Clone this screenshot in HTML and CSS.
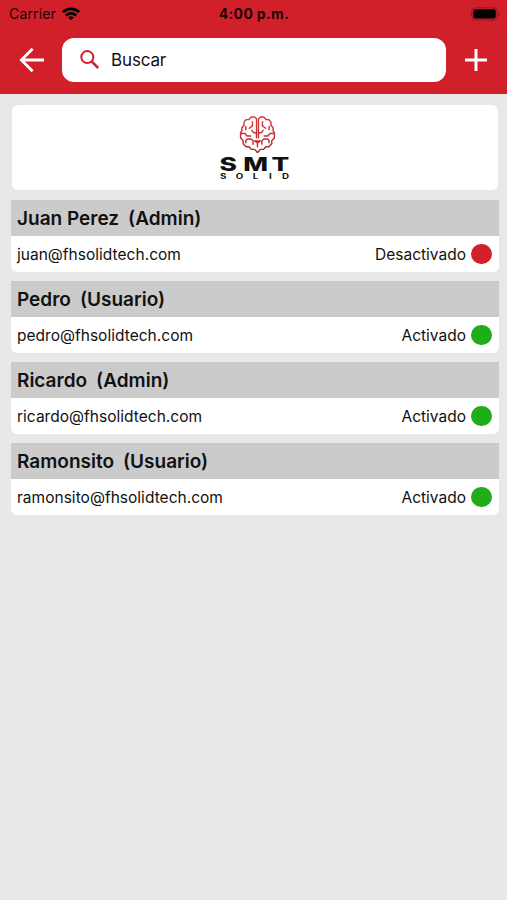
FILE: index.html
```html
<!DOCTYPE html>
<html lang="es">
<head>
<meta charset="utf-8">
<meta name="viewport" content="width=device-width, initial-scale=1">
<title>Usuarios</title>
<link rel="stylesheet" href="styles.css">
</head>
<body>
<header class="top">
  <div class="status">
    <div class="carrier"><span>Carrier</span>
      <svg class="wifi" viewBox="0 0 18 14" width="18" height="14"><g fill="none" stroke="currentColor" stroke-width="2.8"><path d="M.9 5.1a11.7 11.7 0 0 1 16.2 0"/><path d="M3.9 8.4a7.3 7.3 0 0 1 10.2 0"/></g><path d="M9 13.3 6.2 10.5a4 4 0 0 1 5.6 0z" fill="currentColor"/></svg>
    </div>
    <div class="time">4:00 p.m.</div>
    <svg class="battery" viewBox="0 0 30 14" width="30" height="14"><rect x=".8" y=".8" width="25.4" height="12.2" rx="3.6" fill="none" stroke="#8d171e"/><rect x="2.3" y="2.3" width="22.4" height="9.2" rx="2.2"/><path d="M27.3 4.8q3 2 0 4.2z" fill="#8d171e"/></svg>
  </div>
  <div class="bar">
    <svg class="back" viewBox="0 0 26 26" width="26" height="26" fill="none" stroke="#fff" stroke-width="2.8"><path d="M25 13H3M13.6 1.8 2.4 13l11.2 11.2"/></svg>
    <label class="search">
      <svg viewBox="0 0 20 20" width="20" height="20" fill="none" stroke="#d2202a"><circle cx="7.3" cy="7.1" r="6" stroke-width="2"/><path d="m11.6 11.4 6.6 6.6" stroke-width="2.5"/></svg>
      <span>Buscar</span>
    </label>
    <svg class="add" viewBox="0 0 22 22" width="22" height="22" fill="none" stroke="#fff" stroke-width="3"><path d="M11 0v22M0 11h22"/></svg>
  </div>
</header>
<main class="content">
  <section class="logo">
    <svg viewBox="0 0 90 85" width="90" height="85">
      <defs><linearGradient id="red" x1="0" y1="11" x2="0" y2="48" gradientUnits="userSpaceOnUse"><stop offset="0" stop-color="#e5343c"/><stop offset="1" stop-color="#a92a31"/></linearGradient>
      <g id="half">
        <path d="M48.7 34V14l2.2-1.9h3.4l2.6 2.7h2.7l2.4 2.7v3.3l2.2 2.6v3.4l1.4 2.2v5.3l-2.8 3v3.2l-3 3h-3.2l-2.4 2.8h-3.4l-2.6 2.9h-1"/>
        <path d="M53 17v4.5l3.3 2.5M48.7 28.8h3l2-2.6M65 29.6h-4l-2.4 2.6h-3.8M52.4 41v-4l2-1.6h4l1.6 1.6v2.4M60 22v3.6"/>
      </g></defs>
      <g transform="translate(2.4 .6) scale(.945)" fill="none" stroke="url(#red)" stroke-width="1.5" stroke-linejoin="round" stroke-linecap="round"><use href="#half"/><use href="#half" transform="matrix(-1 0 0 1 95.4 0)"/><path d="M44.6 37.4h6.2l-3.1 2.2zM47.7 39.6v4"/></g>
      <text class="wordmark" transform="translate(9.6 66) scale(1.42 1)" x="0 16.6 36.6">SMT</text>
      <text class="subword" transform="translate(10 74.1) scale(1.4 1)" x="0 11.2 23.4 35 44.3">SOLID</text>
    </svg>
  </section>
  <article class="user">
    <h2><span>Juan Perez</span><span>(Admin)</span></h2>
    <div class="row"><span>juan@fhsolidtech.com</span><span class="state">Desactivado<i class="dot off"></i></span></div>
  </article>
  <article class="user">
    <h2><span>Pedro</span><span>(Usuario)</span></h2>
    <div class="row"><span>pedro@fhsolidtech.com</span><span class="state">Activado<i class="dot"></i></span></div>
  </article>
  <article class="user">
    <h2><span>Ricardo</span><span>(Admin)</span></h2>
    <div class="row"><span>ricardo@fhsolidtech.com</span><span class="state">Activado<i class="dot"></i></span></div>
  </article>
  <article class="user">
    <h2><span>Ramonsito</span><span>(Usuario)</span></h2>
    <div class="row"><span>ramonsito@fhsolidtech.com</span><span class="state">Activado<i class="dot"></i></span></div>
  </article>
</main>
</body>
</html>
```
FILE: styles.css
```css
* { box-sizing: border-box; }
body { margin: 0; min-height: 900px; background: #e8e8e8; color: #111; font-family: Inter, "Liberation Sans", sans-serif; }
.top { height: 94px; background: #d2202a; }
.status { height: 27px; padding: 0 6px 0 9px; display: grid; grid-template-columns: 1fr auto 1fr; align-items: center; color: #200306; }
.carrier { display: flex; align-items: center; gap: 6px; font-size: 14px; letter-spacing: .15px; }
.wifi { color: #000; }
.time { font-size: 14px; font-weight: 700; letter-spacing: .35px; margin-right: 2px; }
.battery { justify-self: end; }
.bar { height: 65px; padding: 10.5px 20px 10.5px 19px; display: flex; align-items: center; }
.back { margin-right: 17px; }
.search { width: 384px; height: 44px; background: #fff; border-radius: 12px; padding-left: 18px; display: flex; align-items: center; gap: 11px; font-size: 17px; letter-spacing: -.15px; margin-right: 19px; }
.add { flex: none; }
.content { padding: 11px 8px 0 11px; }
.logo { height: 85px; margin: 0 1px 10px; border-radius: 6px; background: #fff; display: flex; justify-content: center; }
.wordmark { font-size: 18.5px; font-weight: 800; fill: #111; }
.subword { font-size: 7px; font-weight: 700; fill: #111; }
.user { height: 72px; margin-bottom: 9px; background: #fff; border-radius: 0 0 6px 6px; }
h2 { margin: 0; height: 36px; padding-left: 6px; background: #cbcbcb; display: flex; align-items: center; gap: 9px; font-size: 19px; font-weight: 600; }
.row { height: 36px; padding: 0 7.5px 0 6px; display: flex; align-items: center; justify-content: space-between; font-size: 15.5px; letter-spacing: .02px; }
.state { display: flex; align-items: center; gap: 5px; letter-spacing: 0; }
.dot { width: 20.5px; height: 20.5px; border-radius: 50%; background: #20ad19; }
.dot.off { background: #d2202a; }
```
